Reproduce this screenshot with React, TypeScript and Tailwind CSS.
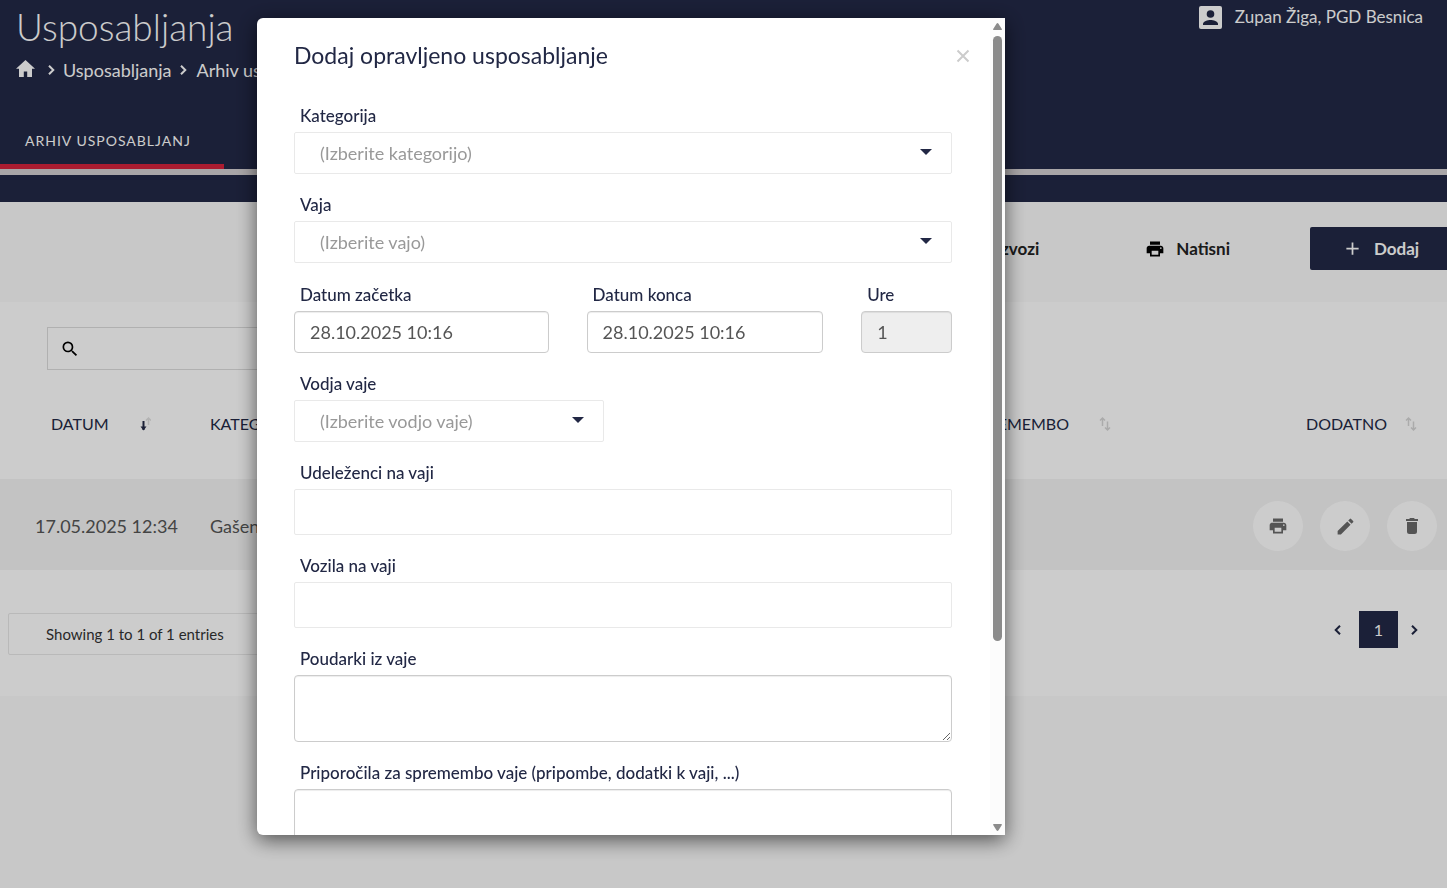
import type { ReactNode } from 'react';
import { MdAdd, MdEdit, MdPrint, MdSearch } from 'react-icons/md';

function SortIcon({ active = false }: { active?: boolean }) {
  return (
    <svg className="h-4 w-3 shrink-0" viewBox="0 0 12 16" fill="none">
      {active ? (
        <>
          <path d="M9.500 9V2M7 4.500L9.500 2 12 4.500" stroke="#e0e0e0" strokeWidth="1.500" />
          <path d="M4.500 5v9" stroke="#222845" strokeWidth="2" />
          <path d="M1.500 10.500h6l-3 4z" fill="#222845" />
        </>
      ) : (
        <>
          <path d="M3.500 10V2M1 4.500L3.500 2 6 4.500" stroke="#d6d6d6" strokeWidth="1.500" />
          <path d="M8.500 5.500V14M6 11.500L8.500 14l2.500-2.500" stroke="#d6d6d6" strokeWidth="1.500" />
        </>
      )}
    </svg>
  );
}

function HomeIcon() {
  return (
    <svg className="h-[17px] w-[19px]" viewBox="0 0 19 17" fill="currentColor">
      <path d="M9.500 0L0 8.800h3V17h4.800v-5.500h3.400V17H16V8.800h3z" />
    </svg>
  );
}

function AccountIcon() {
  return (
    <svg className="size-[23px]" viewBox="0 0 23 23">
      <rect width="23" height="23" rx="2" fill="#fff" />
      <circle cx="11.500" cy="8" r="3.800" fill="#222846" />
      <path d="M4 19v-1c0-2.600 4.800-4 7.500-4s7.500 1.400 7.500 4v1z" fill="#222846" />
    </svg>
  );
}

function TrashIcon() {
  return (
    <svg className="h-4 w-3" viewBox="0 0 12 16" fill="currentColor">
      <path d="M0 1h3.200L4 0h4l.8 1H12v2H0zM1 4h10v9.500a2.500 2.500 0 0 1-2.500 2.500h-5A2.500 2.500 0 0 1 1 13.500z" />
    </svg>
  );
}

function Chevron({ left = false }: { left?: boolean }) {
  return (
    <svg className="h-[10px] w-[7px]" viewBox="0 0 7 10" fill="none" stroke="currentColor" strokeWidth="2">
      <path d={left ? 'M6 .7L1.700 5 6 9.300' : 'M1 .7L5.300 5 1 9.300'} />
    </svg>
  );
}

function Field({ id, label, children }: { id: string; label: string; children: ReactNode }) {
  return (
    <div className="flex min-w-0 flex-col gap-1">
      <label htmlFor={id} className="pl-[6px] text-[17px] leading-6 font-medium text-[#222845]">
        {label}
      </label>
      {children}
    </div>
  );
}

function Select({ id, placeholder }: { id: string; placeholder: string }) {
  return (
    <div className="relative">
      <select
        id={id}
        className="block h-[42px] w-full appearance-none rounded-xs border border-[#e9e9e9] bg-white px-[25px] text-lg leading-6 text-[#999]"
      >
        <option>{placeholder}</option>
      </select>
      <svg className="pointer-events-none absolute top-[17px] right-5 h-[6px] w-3" viewBox="0 0 12 6" fill="#222845">
        <path d="M0 0h12L6 6z" />
      </svg>
    </div>
  );
}

const inputClass =
  'block h-[42px] w-full rounded border border-[#ccc] px-[15px] text-lg text-[#555] shadow-[inset_0_1px_1px_rgba(0,0,0,0.075)]';
const tagInputClass = 'block h-[46px] w-full rounded-xs border border-[#e9e9e9] bg-white px-4 text-lg';
const areaClass =
  'block h-[67px] w-full resize rounded border border-[#ccc] bg-white px-4 py-2 text-lg shadow-[inset_0_1px_1px_rgba(0,0,0,0.075)]';
const roundButton = 'flex size-[50px] items-center justify-center rounded-full bg-white text-[#6a6a6a]';

function Page() {
  return (
    <div className="min-h-screen bg-[#fafafa]">
      <header className="bg-[#222846] text-white">
        <div className="flex h-[118px] justify-between pr-6 pl-4">
          <div>
            <h1 className="pt-[2px] text-[37px] leading-[50px] font-light">Usposabljanja</h1>
            <nav className="mt-1 flex items-center text-lg leading-7">
              <a href="#" aria-label="Domov" className="mr-[13px] mb-1">
                <HomeIcon />
              </a>
              <Chevron />
              <a href="#" className="mx-[8px]">Usposabljanja</a>
              <Chevron />
              <a href="#" className="ml-[10px]">Arhiv usposabljanj</a>
            </nav>
          </div>
          <div className="flex h-[35px] items-center gap-[13px] text-[17px]">
            <AccountIcon />
            <span className="pb-[2px]">Zupan Žiga, PGD Besnica</span>
          </div>
        </div>
        <div className="flex border-b-[6px] border-[#d4d0d2]">
          <a href="#" className="flex h-[51px] w-56 items-center border-b-[5px] border-[#d6233d] pl-[25px] text-sm tracking-[1px]">
            ARHIV USPOSABLJANJ
          </a>
        </div>
        <div className="h-[27px]" />
      </header>

      <div className="flex h-[100px] items-start justify-end overflow-hidden pt-[25px] text-[17px] leading-6 font-bold text-[#222]">
        <button type="button" className="mr-[106px] h-[43px]">Izvozi</button>
        <button type="button" className="mr-20 flex h-[43px] items-center gap-[11px]">
          <MdPrint className="size-5 text-black" />
          Natisni
        </button>
        <button type="button" className="flex h-[43px] w-[137px] items-center gap-[11px] rounded-l-xs bg-[#222846] pl-8 text-white">
          <MdAdd className="size-[21px]" />
          Dodaj
        </button>
      </div>

      <main className="bg-white pt-[25px]">
        <label className="ml-[47px] flex h-[43px] w-1/2 items-center border border-[#dcdcdc] pl-3">
          <MdSearch className="size-5 text-black" />
          <input type="search" aria-label="Iskanje" className="h-full flex-1 px-2 outline-none" />
        </label>
        <table className="w-full table-fixed text-left text-lg">
          <colgroup>
            <col className="w-[194px]" />
            <col className="w-[330px]" />
            <col />
            <col className="w-[310px]" />
            <col className="w-[316px]" />
          </colgroup>
          <thead>
            <tr className="h-[109px] text-base text-[#222845] *:pb-[2px] *:font-normal">
              <th>
                <div className="flex items-center justify-between pr-[43px] pl-[51px]">
                  DATUM <SortIcon active />
                </div>
              </th>
              <th>
                <div className="pl-4">KATEGORIJA</div>
              </th>
              <th>VAJA</th>
              <th>
                <div className="flex items-center justify-end gap-[30px] pr-5">
                  SPREMEMBO <SortIcon />
                </div>
              </th>
              <th>
                <div className="flex items-center justify-end gap-[18px] pr-[30px]">
                  DODATNO <SortIcon />
                </div>
              </th>
            </tr>
          </thead>
          <tbody>
            <tr className="h-[91px] bg-[#f4f4f4] text-[#555] *:pt-[3px]">
              <td>
                <div className="pl-[35px]">17.05.2025 12:34</div>
              </td>
              <td>
                <div className="pl-4">Gašenje</div>
              </td>
              <td />
              <td />
              <td>
                <div className="flex justify-end gap-[17px] pr-[10px]">
                  <button type="button" aria-label="Natisni" className={roundButton}><MdPrint className="size-5" /></button>
                  <button type="button" aria-label="Uredi" className={roundButton}><MdEdit className="size-[21px]" /></button>
                  <button type="button" aria-label="Izbriši" className={roundButton}><TrashIcon /></button>
                </div>
              </td>
            </tr>
          </tbody>
        </table>
        <div className="flex h-[126px] items-start justify-between pt-[41px] pr-[29px] pl-2">
          <div className="mt-[2px] flex h-[42px] w-[300px] items-center rounded-xs border border-[#e8e8e8] pl-[37px] text-[15px] text-[#333]">
            Showing 1 to 1 of 1 entries
          </div>
          <nav className="flex h-[37px] items-center text-[#222845]">
            <button type="button" aria-label="Nazaj"><Chevron left /></button>
            <button type="button" className="mr-[13px] ml-[18px] h-[37px] w-[39px] bg-[#222846] text-base text-white">1</button>
            <button type="button" aria-label="Naprej"><Chevron /></button>
          </nav>
        </div>
      </main>
    </div>
  );
}

function Dialog() {
  return (
    <div className="fixed inset-0 flex bg-black/20 pt-[18px] pb-[53px] pl-[257px]">
      <div
        role="dialog"
        aria-labelledby="dialog-title"
        className="flex w-[748px] overflow-hidden rounded-l-md bg-white shadow-[0_5px_20px_rgba(0,0,0,0.6)]"
      >
        <form className="min-w-0 flex-1 overflow-hidden pt-5 pr-[38px] pl-[37px]">
          <div className="-mr-[18px] mb-[30px] flex h-9 items-center justify-between">
            <h2 id="dialog-title" className="pb-[2px] text-[23px] leading-8 text-[#222845]">Dodaj opravljeno usposabljanje</h2>
            <button type="button" aria-label="Zapri">
              <svg className="size-[14px]" viewBox="0 0 14 14" stroke="#ccc" strokeWidth="2">
                <path d="M1.500 1.500l11 11M12.500 1.500l-11 11" />
              </svg>
            </button>
          </div>
          <div className="flex flex-col gap-5">
            <div className="flex flex-col gap-[19px]">
              <Field id="category" label="Kategorija"><Select id="category" placeholder="(Izberite kategorijo)" /></Field>
              <Field id="exercise" label="Vaja"><Select id="exercise" placeholder="(Izberite vajo)" /></Field>
            </div>
            <div className="flex flex-col gap-[19px]">
              <div className="grid grid-cols-[255fr_237fr_91fr] gap-[38px]">
                <Field id="start" label="Datum začetka"><input id="start" className={inputClass} defaultValue="28.10.2025 10:16" /></Field>
                <Field id="end" label="Datum konca"><input id="end" className={inputClass} defaultValue="28.10.2025 10:16" /></Field>
                <Field id="hours" label="Ure"><input id="hours" className={inputClass + ' bg-[#eee]'} readOnly defaultValue="1" /></Field>
              </div>
              <div className="w-[310px]">
                <Field id="leader" label="Vodja vaje"><Select id="leader" placeholder="(Izberite vodjo vaje)" /></Field>
              </div>
              <Field id="people" label="Udeleženci na vaji"><input id="people" className={tagInputClass} /></Field>
              <Field id="vehicles" label="Vozila na vaji"><input id="vehicles" className={tagInputClass} /></Field>
              <Field id="notes" label="Poudarki iz vaje"><textarea id="notes" className={areaClass} /></Field>
              <Field id="advice" label="Priporočila za spremembo vaje (pripombe, dodatki k vaji, ...)">
                <textarea id="advice" className={areaClass} />
              </Field>
            </div>
          </div>
        </form>
        <div className="flex w-[15px] flex-col items-center bg-[#fcfcfc] pt-1 pb-[3px]">
          <svg className="h-[10px] w-[9px]" viewBox="0 0 9 10" fill="#8b8b8b"><path d="M4.500 1q.5 0 1 .7L8.800 7q.3 1-.6 1H.8q-.9 0-.6-1l3.300-5.300q.5-.7 1-.7z" /></svg>
          <div className="mt-1 w-[9px] flex-[604] rounded-full bg-[#8b8b8b]" />
          <div className="flex-[181]" />
          <svg className="h-[10px] w-[9px]" viewBox="0 0 9 10" fill="#8b8b8b"><path d="M4.500 9q-.5 0-1-.7L.2 3q-.3-1 .6-1h7.400q.9 0 .6 1L5.500 8.300q-.5.7-1 .7z" /></svg>
        </div>
      </div>
    </div>
  );
}

export default function App() {
  return (
    <div className="font-[Lato,'Open_Sans',sans-serif]">
      <Page />
      <Dialog />
    </div>
  );
}
